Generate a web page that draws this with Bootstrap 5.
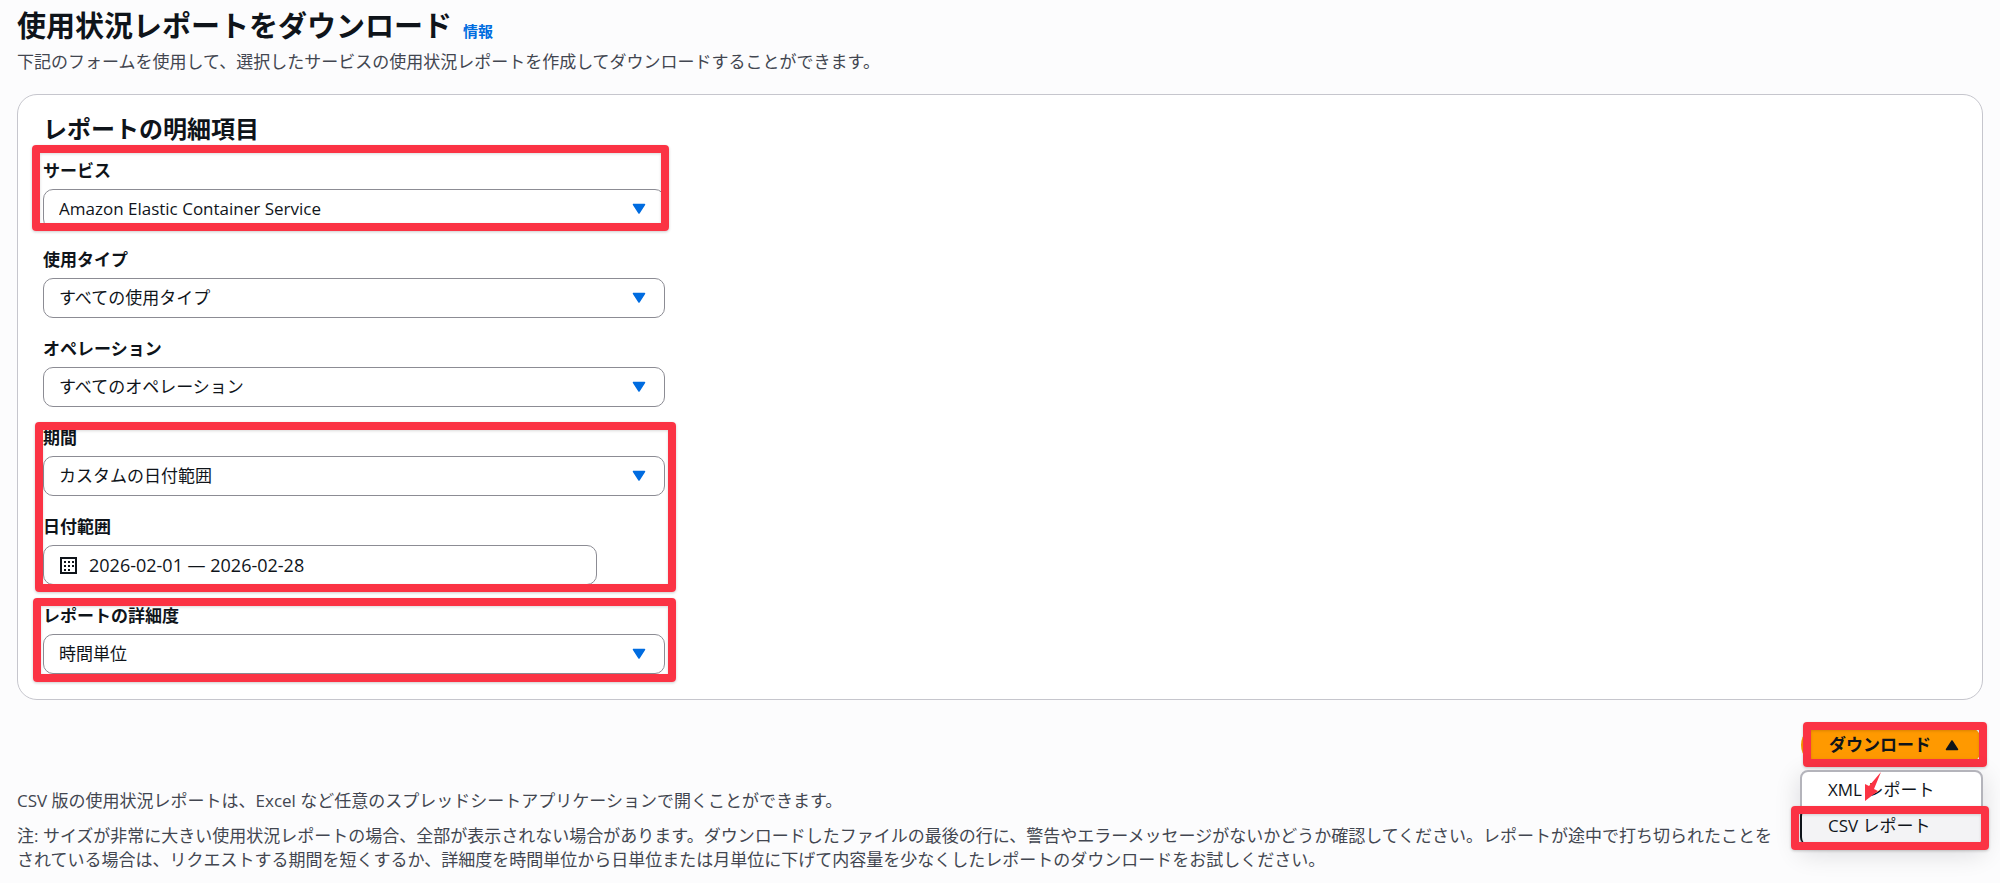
<!DOCTYPE html>
<html lang="ja">
<head>
<meta charset="utf-8">
<meta name="viewport" content="width=device-width, initial-scale=1">
<title>使用状況レポートをダウンロード</title>
<link href="https://cdn.jsdelivr.net/npm/bootstrap@5.3.0/dist/css/bootstrap.min.css" rel="stylesheet">
<style>
  body { background: #fcfcfd; color: #0f141a; font-family: "Open Sans", "Noto Sans CJK JP", sans-serif; font-size: 17px; line-height: 24px; }
  .page { padding: 8px 17px; }
  .title-row { gap: 11px; }
  .page-title { font-size: 29px; line-height: 36px; font-weight: 700; }
  .info-link { font-size: 15px; font-weight: 600; color: #006ce0; text-decoration: none; }
  .muted { color: #424650; }
  .intro { margin: 6px 0 0; }
  .panel { border: 1px solid #c6c6cd; border-radius: 20px; padding: 19px 25px 25px; margin-top: 20px; }
  .panel-title { font-size: 24px; line-height: 30px; font-weight: 600; margin-bottom: 15px; }
  .fields { max-width: 622px; gap: 19px; }
  .form-label { font-weight: 600; margin-bottom: 6px; display: block; }
  .form-select, .date-box { height: 40px; border: 1px solid #8c8c94; border-radius: 10px; padding: 0 48px 0 15px; font-size: 17px; line-height: 24px; color: #0f141a; background-color: #fff; }
  .form-select { background-image: url("data:image/svg+xml,%3Csvg xmlns='http://www.w3.org/2000/svg' viewBox='0 0 14 12'%3E%3Cpath d='M1.5 1.5h11L7 10z' fill='%23006ce0' stroke='%23006ce0' stroke-width='1.5' stroke-linejoin='round'/%3E%3C/svg%3E"); background-size: 14px 12px; background-position: right 18px center; }
  .date-box { width: 89%; padding-left: 16px; padding-right: 16px; gap: 12px; }
  .date-box input { border: 0; padding: 0; outline: 0; background: none; color: inherit; font-size: 18px; }
  .ring { position: absolute; border: 8px solid #fb3344; border-radius: 4px; pointer-events: none; z-index: 3; box-shadow: 0 1px 3px rgba(0,0,0,.2), inset 0 1px 3px rgba(0,0,0,.15); }
  .ring-service { inset: -14px -4px -2px -11px; }
  .ring-period { inset: -4px -11px -7px -8px; }
  .ring-detail { inset: -6px -11px -8px -10px; }
  .ring-button { inset: -3px -4px -2px 2px; }
  .ring-csv { inset: -2px -8px -5px -11px; }
  .actions { margin-top: 25px; }
  .btn-download { width: 182px; height: 40px; border: 0; border-radius: 20px; padding: 0 24px 0 28px; background: #ff9900; color: #0f141a; font-size: 17px; font-weight: 700; }
  .btn-download:hover { background: #fa8900; }
  .download-menu { top: 100%; right: 0; margin-top: 5px; width: 183px; padding: 0; font-size: 17px; border: 2px solid #b4b4bb; border-radius: 8px; box-shadow: 0 6px 24px 2px rgba(0,7,22,.12); }
  .download-menu .dropdown-item { padding: 6px 26px; line-height: 24px; height: 36px; color: #0f141a; }
  .download-menu .picked { background: #f3f3f5; height: 37px; border-left: 2px solid #0f141a; border-radius: 8px; margin-left: -2px; width: 181px; }
  .arrow-mark { position: absolute; top: 0; left: 60px; z-index: 4; pointer-events: none; }
  .notes { margin-top: 24px; }
  .notes p { margin-bottom: 11px; }
</style>
</head>
<body>
<main class="page">
  <header>
    <div class="title-row d-flex align-items-baseline">
      <h1 class="page-title mb-0">使用状況レポートをダウンロード</h1>
      <a href="#info" class="info-link">情報</a>
    </div>
    <p class="muted intro">下記のフォームを使用して、選択したサービスの使用状況レポートを作成してダウンロードすることができます。</p>
  </header>

  <section class="panel bg-white">
    <h2 class="panel-title">レポートの明細項目</h2>
    <form class="fields d-flex flex-column">
      <div class="position-relative">
        <label class="form-label" for="service">サービス</label>
        <select class="form-select" id="service"><option>Amazon Elastic Container Service</option></select>
        <span class="ring ring-service"></span>
      </div>
      <div>
        <label class="form-label" for="usage">使用タイプ</label>
        <select class="form-select" id="usage"><option>すべての使用タイプ</option></select>
      </div>
      <div>
        <label class="form-label" for="operation">オペレーション</label>
        <select class="form-select" id="operation"><option>すべてのオペレーション</option></select>
      </div>
      <div class="fields d-flex flex-column position-relative">
        <div>
          <label class="form-label" for="period">期間</label>
          <select class="form-select" id="period"><option>カスタムの日付範囲</option></select>
        </div>
        <div>
          <label class="form-label" for="range">日付範囲</label>
          <div class="date-box d-flex align-items-center">
            <svg width="17" height="17" viewBox="0 0 17 17" fill="#0f141a" aria-hidden="true"><path d="M1 1h15v15H1z" fill="none" stroke="#0f141a" stroke-width="2"/><path d="M4 4h2v2H4zM8 4h2v2H8zM12 4h2v2h-2zM4 8h2v2H4zM8 8h2v2H8zM12 8h2v2h-2zM4 12h2v2H4zM8 12h2v2H8z"/></svg>
            <input class="flex-grow-1" type="text" id="range" value="2026-02-01 — 2026-02-28">
          </div>
        </div>
        <span class="ring ring-period"></span>
      </div>
      <div class="position-relative">
        <label class="form-label" for="detail">レポートの詳細度</label>
        <select class="form-select" id="detail"><option>時間単位</option></select>
        <span class="ring ring-detail"></span>
      </div>
    </form>
  </section>

  <div class="actions d-flex justify-content-end">
    <div class="dropdown position-relative">
      <button type="button" class="btn-download d-flex align-items-center justify-content-between" aria-expanded="true">ダウンロード
        <svg width="14" height="12" viewBox="0 0 14 12" aria-hidden="true"><path d="M1.5 10.5h11L7 2z" fill="#0f141a" stroke="#0f141a" stroke-width="1.5" stroke-linejoin="round"/></svg>
      </button>
      <span class="ring ring-button"></span>
      <ul class="dropdown-menu download-menu show">
        <li><a class="dropdown-item" href="#xml">XML レポート</a></li>
        <li class="position-relative"><a class="dropdown-item picked" href="#csv">CSV レポート</a><span class="ring ring-csv"></span></li>
        <li class="arrow-mark" aria-hidden="true"><svg class="d-block" width="22" height="30" viewBox="0 0 22 30"><path d="M19 0L7 14 3 12 3 29 16 19 12 17z" fill="#fb3344"/></svg></li>
      </ul>
    </div>
  </div>

  <div class="notes muted">
    <p>CSV 版の使用状況レポートは、Excel など任意のスプレッドシートアプリケーションで開くことができます。</p>
    <p class="mb-0">注: サイズが非常に大きい使用状況レポートの場合、全部が表示されない場合があります。ダウンロードしたファイルの最後の行に、警告やエラーメッセージがないかどうか確認してください。レポートが途中で打ち切られたことを<br>されている場合は、リクエストする期間を短くするか、詳細度を時間単位から日単位または月単位に下げて内容量を少なくしたレポートのダウンロードをお試しください。</p>
  </div>
</main>
<script src="https://cdn.jsdelivr.net/npm/bootstrap@5.3.0/dist/js/bootstrap.bundle.min.js"></script>
</body>
</html>
